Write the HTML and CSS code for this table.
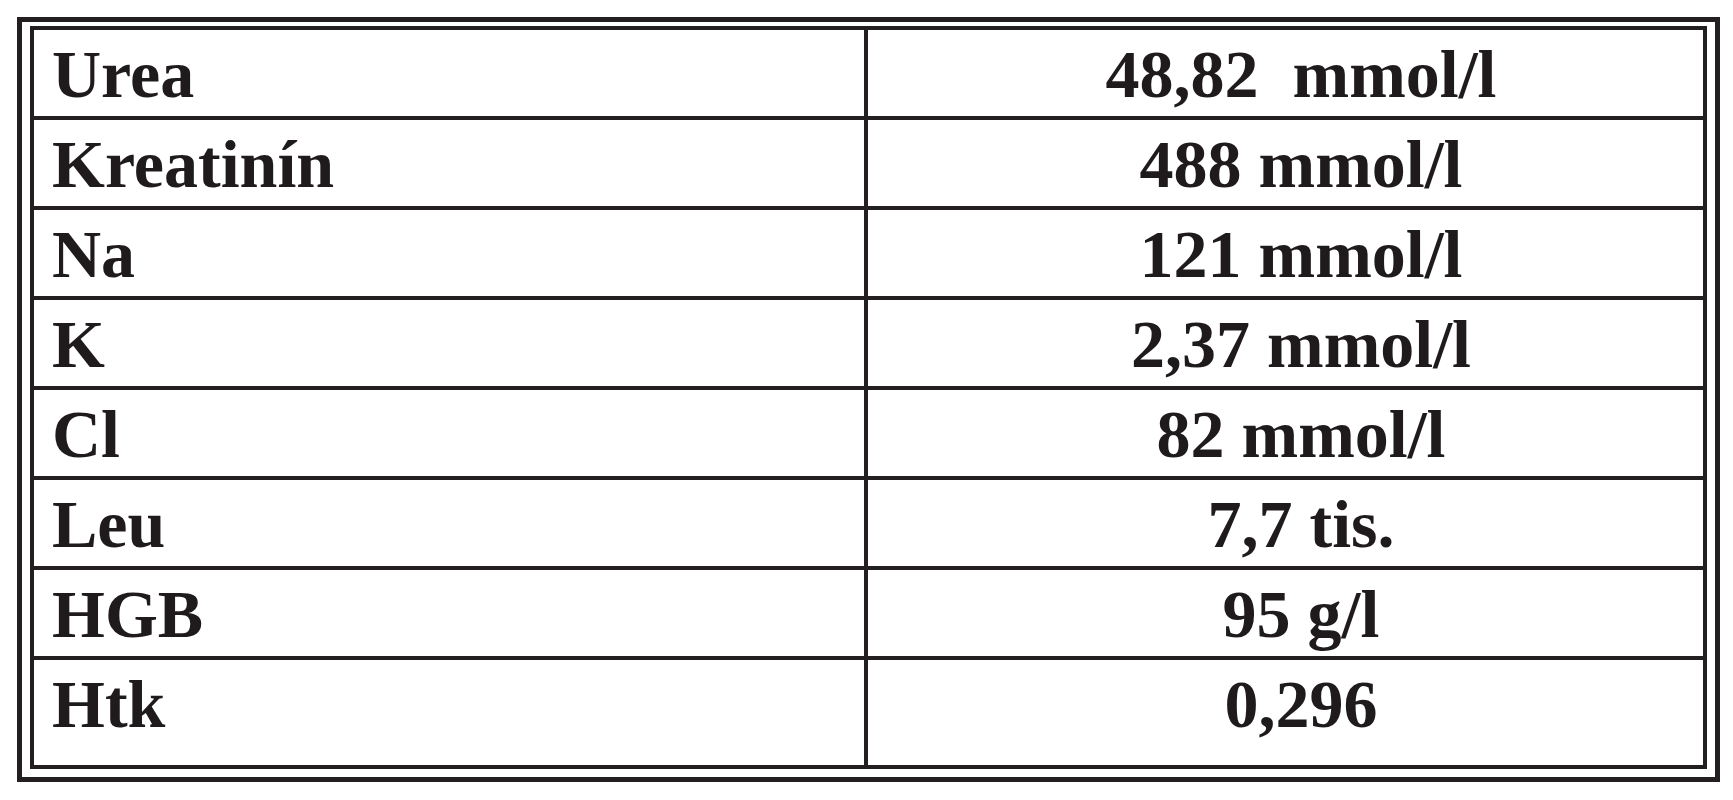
FILE: index.html
```html
<!DOCTYPE html>
<html lang="sk">
<head>
<meta charset="utf-8">
<title>Laboratórne hodnoty</title>
<link rel="stylesheet" href="styles.css">
</head>
<body>
<div class="frame">
  <div class="grid">
    <div class="cell label">Urea</div><div class="cell value">48,82&nbsp; mmol/l</div>
    <div class="cell label">Kreatinín</div><div class="cell value">488 mmol/l</div>
    <div class="cell label">Na</div><div class="cell value">121 mmol/l</div>
    <div class="cell label">K</div><div class="cell value">2,37 mmol/l</div>
    <div class="cell label">Cl</div><div class="cell value">82 mmol/l</div>
    <div class="cell label">Leu</div><div class="cell value">7,7 tis.</div>
    <div class="cell label">HGB</div><div class="cell value">95 g/l</div>
    <div class="cell label">Htk</div><div class="cell value">0,296</div>
  </div>
</div>
</body>
</html>
```
FILE: styles.css
```css
html, body {
  margin: 0;
  padding: 0;
  background: #ffffff;
}

.frame {
  margin: 17px 0 0 17px;
  width: 1693px;
  border: 5px solid #231f20;
  padding: 4px 8px 8px 8px;
  box-sizing: content-box;
  width: 1677px;
}

.grid {
  display: grid;
  grid-template-columns: 830px 835px;
  grid-template-rows: repeat(7, 86px) 105px;
  gap: 4px;
  background: #231f20;
  border: 4px solid #231f20;
  width: 1669px;
}

.cell {
  background: #ffffff;
  font-family: "Liberation Serif", "Times New Roman", serif;
  font-weight: bold;
  font-size: 68px;
  line-height: 83px;
  padding-top: 3px;
  color: #1f1b1d;
  white-space: nowrap;
}

.label {
  padding-left: 18px;
}

.value {
  text-align: center;
  padding-left: 31px;
}
```
